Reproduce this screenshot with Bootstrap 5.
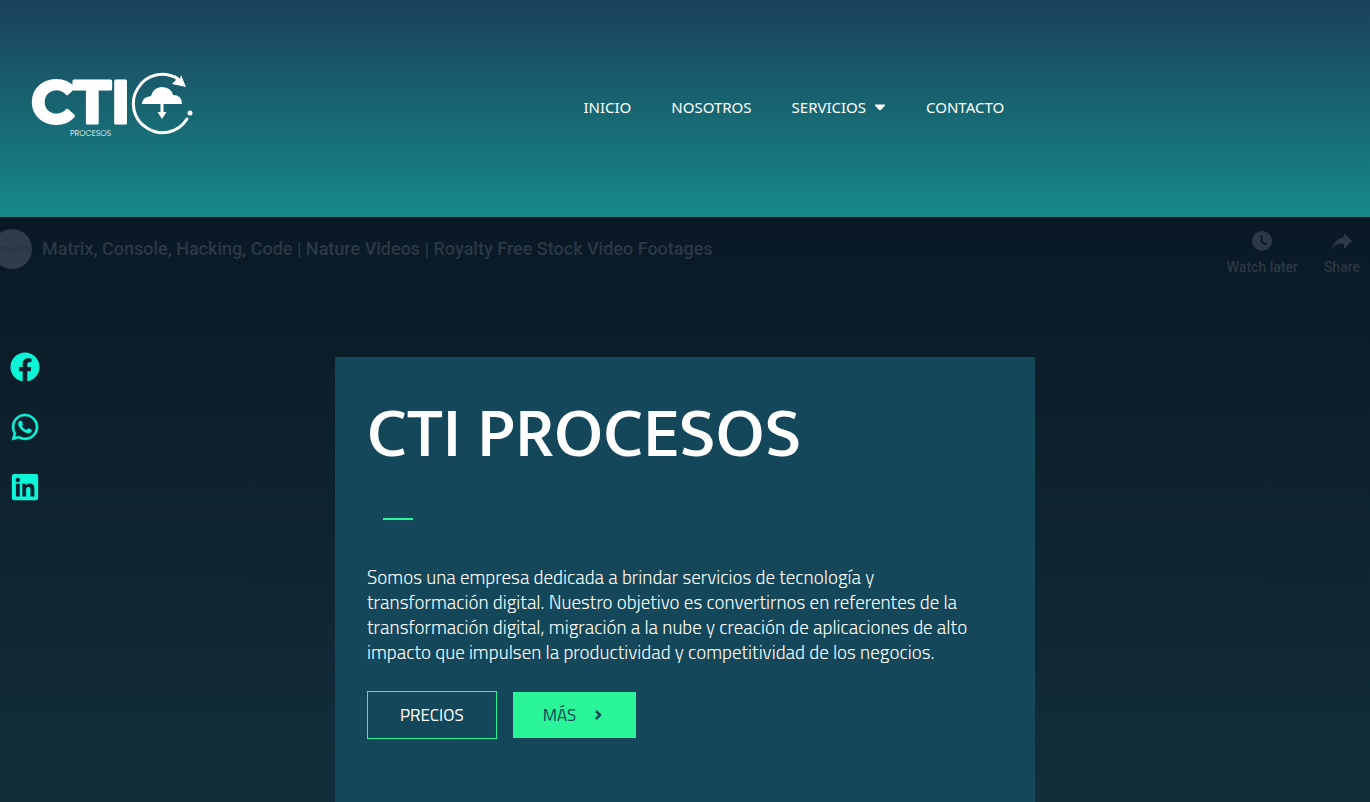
<!DOCTYPE html>
<html lang="es">
<head>
<meta charset="utf-8">
<meta name="viewport" content="width=device-width, initial-scale=1">
<title>CTI Procesos</title>
<link rel="stylesheet" href="https://cdn.jsdelivr.net/npm/bootstrap@5.3.0/dist/css/bootstrap.min.css">
<style>
body { font-family: "Noto Sans", "Liberation Sans", sans-serif; background: #122c3a; }
.site-header { background: linear-gradient(#1b405b, #158a88); padding: 73px 32px 80px; }
.brand-logo { width: 162px; height: 64px; display: block; overflow: visible; }
.main-menu .nav-link { color: #fff; font: 15px/24px "Noto Sans", sans-serif; padding: 6px 20px; }
.hero { background: linear-gradient(#091824, #132e3b); }
.video-bar { height: 140px; color: #2b3845; font-family: Roboto, sans-serif; font-weight: 500; padding: 12px 10px 0 0; }
.video-bar a { color: inherit; }
.avatar { width: 40px; height: 40px; margin: 0 10px 0 -8px; background: #2f3d4a; color: #22303c; font: 10px/40px Montserrat, Lato, sans-serif; }
.video-title { font-size: 18px; line-height: 40px; }
.video-actions { gap: 26px; }
.video-action { font-size: 14px; line-height: 16px; }
.social { left: 10px; top: 135px; gap: 30px; color: #0cf5d6; }
.social a { color: inherit; width: 30px; height: 30px; }
.social svg { display: block; margin: auto; }
.panel { width: 700px; max-width: 100%; background: #14475a; color: #fff; padding: 32px; }
.panel h1 { font: 500 71px/92px Mukta, "Noto Sans", sans-serif; margin: 0; }
.rule { width: 30px; height: 2px; margin: 37px 16px 44px; background: #2af598; }
.intro { font: 300 19px/25px "Titillium Web", "Noto Sans", sans-serif; margin-bottom: 27px; padding-right: 16px; }
.panel .btn { border-radius: 0; font: 400 17px/24px "Titillium Web", "Noto Sans", sans-serif; padding: 11px 32px; }
.panel .btn-line { color: #fff; border: 1px solid #2af598; }
.panel .btn-fill { color: #14475a; background: #2af598; border: 0; padding: 11px 30px; }
</style>
</head>
<body>
<div class="min-vh-100 d-flex flex-column">
  <header class="site-header">
    <div class="row g-0">
      <div class="col-2">
        <a class="d-inline-block align-top" href="#" aria-label="CTI Procesos">
          <svg class="brand-logo" viewBox="0 0 162 64" fill="#fff">
            <text x="-1" y="50" font-family="Montserrat, Lato, sans-serif" font-weight="700" font-size="60" stroke="#fff" stroke-width="3" stroke-linejoin="round">CTI</text>
            <text x="38" y="63" font-family="Poppins, Lato, sans-serif" font-weight="300" font-size="8">PROCESOS</text>
            <path d="M146 6A29 29 0 1 0 155 46" fill="none" stroke="#fff" stroke-width="3" stroke-linecap="round"/>
            <path d="m140 11 4-4-1-5 5 4 1-4 5 12Z"/>
            <circle cx="158" cy="40" r="2.500"/>
            <path d="M110 31q0-7 9-8 2-8 10-9 10 0 12 8 9 0 9 9Z"/>
            <path d="M128.500 30h3v9h3l-4.500 7-4.500-7h3Z"/>
          </svg>
        </a>
      </div>
      <nav class="col-10 pt-3" aria-label="Principal">
        <ul class="nav main-menu justify-content-center">
          <li class="nav-item"><a class="nav-link" href="#">INICIO</a></li>
          <li class="nav-item"><a class="nav-link" href="#">NOSOTROS</a></li>
          <li class="nav-item"><a class="nav-link d-flex align-items-center" href="#">SERVICIOS
            <svg class="ms-2" width="12" height="7" viewBox="0 0 12 7" fill="#fff" aria-hidden="true"><path d="M1.500.5h9q1 .5.4 1.300L6.700 6q-.7.6-1.400 0L1.100 1.800Q.5 1 1.500.5"/></svg></a></li>
          <li class="nav-item"><a class="nav-link" href="#">CONTACTO</a></li>
        </ul>
      </nav>
    </div>
  </header>

  <main class="hero flex-grow-1 d-flex flex-column position-relative overflow-hidden">
    <div class="video-bar d-flex align-items-start">
      <span class="avatar rounded-circle overflow-hidden d-flex justify-content-center flex-shrink-0">beautify</span>
      <a class="video-title text-decoration-none text-truncate" href="#">Matrix, Console, Hacking, Code | Nature Videos | Royalty Free Stock Video Footages</a>
      <div class="video-actions d-flex ms-auto flex-shrink-0">
        <a class="video-action text-center text-decoration-none" href="#">
          <svg class="d-block mx-auto mb-2" width="24" height="22" viewBox="0 0 24 22" aria-hidden="true"><circle cx="12" cy="12" r="10" fill="#2b3845"/><path d="M11.500 6v6.500l5 3" fill="none" stroke="#0a1926" stroke-width="1.800"/></svg>
          Watch later</a>
        <a class="video-action text-center text-decoration-none" href="#">
          <svg class="d-block mx-auto mb-2" width="24" height="22" viewBox="0 0 24 22" fill="#2b3845" aria-hidden="true"><path d="M14 4l8 8-8 8v-5q-8-1-12 5 2-10 12-12Z"/></svg>
          Share</a>
      </div>
    </div>

    <div class="social position-absolute d-flex flex-column">
      <a href="#" aria-label="Facebook"><svg width="30" height="30" viewBox="0 0 512 512" fill="currentColor"><path d="M504 256C504 119 393 8 256 8S8 119 8 256c0 123.780 90.690 226.380 209.250 245V327.690h-63V256h63v-54.640c0-62.150 37-96.480 93.670-96.480 27.140 0 55.520 4.840 55.520 4.840v61h-31.280c-30.800 0-40.410 19.120-40.410 38.730V256h68.780l-11 71.690h-57.780V501C413.310 482.380 504 379.780 504 256z"/></svg></a>
      <a href="#" aria-label="WhatsApp"><svg width="28" height="30" viewBox="0 0 448 512" fill="currentColor" stroke="currentColor" stroke-width="8"><path d="M380.900 97.100C339 55.100 283.200 32 223.900 32c-122.400 0-222 99.600-222 222 0 39.100 10.200 77.300 29.600 111L0 480l117.700-30.900c32.400 17.700 68.900 27 106.100 27h.1c122.300 0 224.100-99.600 224.100-222 0-59.300-25.200-115-67.100-157zm-157 341.600c-33.200 0-65.700-8.900-94-25.700l-6.700-4-69.800 18.300L72 359.200l-4.400-7c-18.500-29.400-28.200-63.300-28.200-98.200 0-101.700 82.800-184.500 184.600-184.500 49.300 0 95.600 19.200 130.400 54.100 34.800 34.900 56.200 81.200 56.100 130.500 0 101.800-84.900 184.600-186.600 184.600zm101.200-138.200c-5.500-2.800-32.800-16.200-37.900-18-5.100-1.900-8.800-2.800-12.500 2.800-3.700 5.600-14.300 18-17.600 21.800-3.200 3.700-6.500 4.200-12 1.400-32.600-16.300-54-29.100-75.500-66-5.700-9.800 5.700-9.100 16.300-30.300 1.800-3.700.9-6.900-.5-9.700-1.400-2.800-12.500-30.100-17.100-41.200-4.500-10.800-9.100-9.300-12.500-9.500-3.200-.2-6.900-.2-10.600-.2-3.700 0-9.700 1.400-14.800 6.900-5.100 5.600-19.400 19-19.400 46.300 0 27.300 19.900 53.700 22.600 57.400 2.800 3.700 39.100 59.700 94.800 83.800 35.200 15.200 49 16.500 66.600 13.900 10.700-1.600 32.800-13.400 37.400-26.400 4.600-13 4.600-24.100 3.200-26.400-1.300-2.500-5-3.900-10.500-6.600z"/></svg></a>
      <a href="#" aria-label="LinkedIn"><svg width="28" height="30" viewBox="0 0 448 512" fill="currentColor"><path d="M416 32H31.900C14.300 32 0 46.500 0 64.300v383.400C0 465.500 14.300 480 31.900 480H416c17.600 0 32-14.500 32-32.300V64.300c0-17.800-14.400-32.300-32-32.300zM135.400 416H69V202.200h66.500V416zm-33.200-243c-21.300 0-38.500-17.300-38.500-38.500S80.900 96 102.200 96c21.200 0 38.500 17.300 38.500 38.500 0 21.300-17.200 38.500-38.500 38.500zm282.100 243h-66.400V312c0-24.800-.5-56.700-34.500-56.700-34.600 0-39.900 27-39.900 54.900V416h-66.400V202.200h63.700v29.200h.9c8.900-16.800 30.600-34.500 62.900-34.500 67.200 0 79.700 44.300 79.700 101.900V416z"/></svg></a>
    </div>

    <section class="panel mx-auto flex-grow-1">
      <h1>CTI PROCESOS</h1>
      <div class="rule"></div>
      <p class="intro">Somos una empresa dedicada a brindar servicios de tecnología y transformación digital. Nuestro objetivo es convertirnos en referentes de la transformación digital, migración a la nube y creación de aplicaciones de alto impacto que impulsen la productividad y competitividad de los negocios.</p>
      <div class="d-flex align-items-center gap-3">
        <button type="button" class="btn btn-line">PRECIOS</button>
        <button type="button" class="btn btn-fill d-flex align-items-center">MÁS
          <svg class="ms-3" width="14" height="12" viewBox="0 0 14 12" aria-hidden="true"><path d="m4 2 4 4-4 4" fill="none" stroke="#14475a" stroke-width="2.500"/></svg></button>
      </div>
    </section>
  </main>
</div>
<script src="https://cdn.jsdelivr.net/npm/bootstrap@5.3.0/dist/js/bootstrap.bundle.min.js"></script>
</body>
</html>
